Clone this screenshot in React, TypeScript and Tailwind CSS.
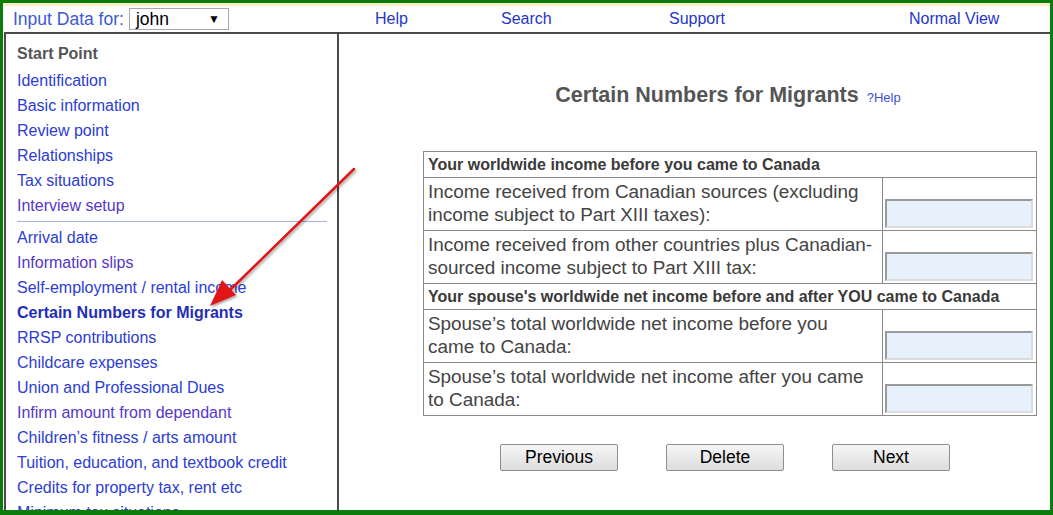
import React from "react";

const firstLinks = [
  { label: "Identification", visited: false },
  { label: "Basic information", visited: false },
  { label: "Review point", visited: false },
  { label: "Relationships", visited: false },
  { label: "Tax situations", visited: false },
  { label: "Interview setup", visited: true },
];

const secondLinks = [
  { label: "Arrival date", visited: false },
  { label: "Information slips", visited: true },
  { label: "Self-employment / rental income", visited: false },
  { label: "Certain Numbers for Migrants", visited: false, active: true },
  { label: "RRSP contributions", visited: false },
  { label: "Childcare expenses", visited: false },
  { label: "Union and Professional Dues", visited: false },
  { label: "Infirm amount from dependant", visited: true },
  { label: "Children’s fitness / arts amount", visited: false },
  { label: "Tuition, education, and textbook credit", visited: false },
  { label: "Credits for property tax, rent etc", visited: false },
  { label: "Minimum tax situations", visited: false },
];

function SideLink({ label, visited, active }: { label: string; visited?: boolean; active?: boolean }) {
  if (active) {
    return <div className="h-[25px] leading-[25px] font-bold text-[#1f2fb8] whitespace-nowrap">{label}</div>;
  }
  return (
    <div className={`h-[25px] leading-[25px] whitespace-nowrap ${visited ? "text-[#5537c9]" : "text-[#2c3cd4]"}`}>
      {label}
    </div>
  );
}

function AmountInput() {
  return (
    <input
      type="text"
      className="w-[148px] h-[29px] bg-[#e6f1fc] border-2 border-t-[#9a9a9a] border-l-[#9a9a9a] border-r-[#dcdcdc] border-b-[#dcdcdc] outline-none"
    />
  );
}

function SectionRow({ text }: { text: string }) {
  return (
    <tr>
      <td colSpan={2} className="border border-[#8a8a8a] h-[26px] px-[4px] text-[16px] font-bold text-[#3a3a3a] leading-[20px]">
        {text}
      </td>
    </tr>
  );
}

function InputRow({ lines }: { lines: string[] }) {
  return (
    <tr>
      <td className="border border-[#8a8a8a] w-[459px] h-[53px] px-[4px] pt-[1px] pb-[3px] align-middle text-[18.9px] leading-[23px] text-[#444] whitespace-nowrap">
        {lines[0]}
        <br />
        {lines[1]}
      </td>
      <td className="border border-[#8a8a8a] align-bottom pl-[2px] pb-[2px]">
        <AmountInput />
      </td>
    </tr>
  );
}

function NavButton({ label }: { label: string }) {
  return (
    <button className="w-[118px] h-[27px] rounded-[2px] border border-[#8f8f8f] bg-gradient-to-b from-[#f6f6f6] to-[#dddddd] text-[17.5px] text-black leading-none">
      {label}
    </button>
  );
}

export default function App() {
  return (
    <div
      className="relative w-[1053px] h-[515px] overflow-hidden bg-white border-[#0c7c0c] border-t-[3px] border-l-[3px] border-r-[3px] border-b-[5px]"
      style={{ fontFamily: '"Liberation Sans", Arial, sans-serif' }}
    >
      <div className="h-[3px] bg-[#fbf0c2]" />

      {/* top bar */}
      <div className="flex items-center h-[26px] text-[16px]">
        <div className="flex items-center w-[372px] pl-[10px]">
          <span className="text-[17.5px] text-[#3b5ad2]">Input Data for:</span>
          <div className="ml-[5px] w-[100px] h-[22px] border border-[#a8a8a8] flex items-center justify-between pl-[6px] pr-[8px] text-[17.5px] text-black">
            <span>john</span>
            <span className="text-[12px]">▼</span>
          </div>
        </div>
        <span className="w-[126px] text-[#2636c8]">Help</span>
        <span className="w-[168px] text-[#2636c8]">Search</span>
        <span className="w-[240px] text-[#2636c8]">Support</span>
        <span className="text-[#2636c8]">Normal View</span>
      </div>

      <div className="flex h-full ml-[1px] border-t-2 border-[#4a4a4a]">
        {/* sidebar */}
        <div className="w-[335px] shrink-0 border-l-2 border-r-2 border-[#4a4a4a] pl-[11px] pr-[10px] pt-[7px] text-[16px]">
          <div className="h-[25px] leading-[25px] font-bold text-[#555] mb-[2px]">Start Point</div>
          {firstLinks.map((l) => (
            <SideLink key={l.label} {...l} />
          ))}
          <div className="my-[3px] h-px bg-[#a6b0dd]" />
          {secondLinks.map((l) => (
            <SideLink key={l.label} {...l} />
          ))}
        </div>

        {/* main */}
        <div className="flex-1 pl-[84px] pt-[45px]">
          <div className="w-[614px] flex items-baseline justify-center pr-[4px]">
            <h1 className="text-[21.5px] font-bold text-[#555]">Certain Numbers for Migrants</h1>
            <span className="ml-[8px] text-[13px] text-[#3a50d6]">?Help</span>
          </div>

          <table className="mt-[40px] w-[614px] border-collapse">
            <tbody>
              <SectionRow text="Your worldwide income before you came to Canada" />
              <InputRow lines={["Income received from Canadian sources (excluding", "income subject to Part XIII taxes):"]} />
              <InputRow lines={["Income received from other countries plus Canadian-", "sourced income subject to Part XIII tax:"]} />
              <SectionRow text="Your spouse's worldwide net income before and after YOU came to Canada" />
              <InputRow lines={["Spouse’s total worldwide net income before you", "came to Canada:"]} />
              <InputRow lines={["Spouse’s total worldwide net income after you came", "to Canada:"]} />
            </tbody>
          </table>

          <div className="mt-[28px] ml-[77px] flex gap-[48px]">
            <NavButton label="Previous" />
            <NavButton label="Delete" />
            <NavButton label="Next" />
          </div>
        </div>
      </div>

      {/* annotation arrow */}
      <svg className="absolute left-0 top-0 pointer-events-none" width="1053" height="515">
        <defs>
          <filter id="arrowShadow" x="-20%" y="-20%" width="140%" height="140%">
            <feDropShadow dx="1.5" dy="1.5" stdDeviation="1.2" floodColor="#000" floodOpacity="0.35" />
          </filter>
        </defs>
        <g filter="url(#arrowShadow)">
          <line x1="351" y1="166" x2="226" y2="288" stroke="#e01818" strokeWidth="2.5" strokeLinecap="round" />
          <polygon points="207,303 219,277 233,292" fill="#e01818" />
        </g>
      </svg>
    </div>
  );
}
